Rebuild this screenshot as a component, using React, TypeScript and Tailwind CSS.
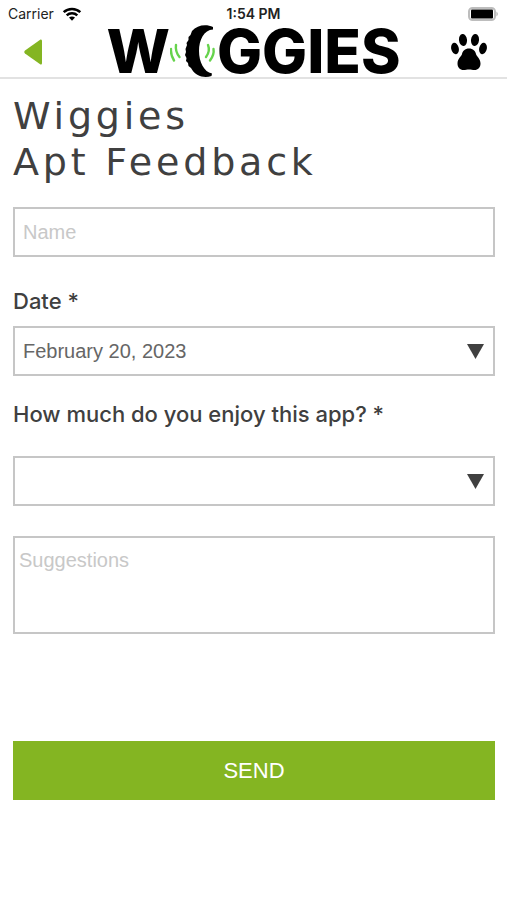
import { useState } from "react";
import type { ReactNode } from "react";

const fieldClass =
  "block w-full rounded-none border-2 border-[#c6c6c6] bg-white font-['Liberation_Sans',Arial,sans-serif] text-xl outline-none";

function StatusBar() {
  return (
    <div className="grid h-7 grid-cols-3 items-center px-2 font-['Inter',sans-serif] text-sm text-[#222]">
      <div className="flex items-center gap-2">
        <span>Carrier</span>
        <svg viewBox="0 0 20 14" className="h-[14px] w-5" aria-hidden="true">
          <g fill="none" stroke="#000" strokeWidth="2.500">
            <path d="M1.700 5.200C6.200 .9 13.800 .9 18.300 5.200" />
            <path d="M4.700 8.400C7.700 5.600 12.300 5.600 15.300 8.400" />
          </g>
          <path d="M7 10.600C8.700 9.100 11.300 9.100 13 10.600L10 13.700Z" />
        </svg>
      </div>
      <span className="text-center font-semibold">1:54 PM</span>
      <svg viewBox="0 0 31 14" className="h-[14px] w-[31px] justify-self-end" aria-hidden="true">
        <rect x="1" y="1" width="26" height="12" rx="3.500" fill="#fff" stroke="#bdbdbd" strokeWidth="2" />
        <rect x="3" y="2.500" width="22" height="9" rx="1" fill="#000" />
        <path d="M28.500 4.500Q31 7 28.500 9.500Z" fill="#aaa" />
      </svg>
    </div>
  );
}

function Logo() {
  return (
    <div className="mb-0.5 flex h-12 items-center font-['Inter',sans-serif] text-[60px] leading-[48px] font-extrabold text-black">
      <span>W</span>
      <svg viewBox="0 0 47 54" className="h-[54px] w-[47px] shrink-0" aria-hidden="true">
        <path
          d="M43 3C36-.5 27 1 22 7L20.500 11 18.500 13 18.500 16 16.500 19 17 21 15.500 25 16 28 15 31 16.500 34 16 37 18 39 18.500 42 21 44C25 52 34 54.500 41.500 52L42 49.500C34 48 29 38 29 27C29 16 34 6 43 5.500Z"
          fill="#000"
        />
        <g fill="none" stroke="#66d34c" strokeWidth="2.400" strokeLinecap="round">
          <path d="M6 21Q5 27.500 9.500 33" />
          <path d="M1 25Q.500 31 4 36.500" />
          <path d="M38 21Q40.500 27 36 33" />
          <path d="M43.500 25Q44.500 30.500 40 36.500" />
        </g>
      </svg>
      <span>GGIES</span>
    </div>
  );
}

function Header() {
  return (
    <header className="border-b-2 border-[#e2e2e2]">
      <StatusBar />
      <div className="flex h-[49px] items-center justify-between pr-5 pb-0.5 pl-6">
        <button type="button" aria-label="Back" className="flex w-8 items-center">
          <svg viewBox="0 0 18 26" className="h-[26px] w-[18px]" aria-hidden="true">
            <path d="M1 11.500 16.500.500Q18 0 18 2V24Q18 26 16.500 25.500L1 14.500Q-.5 13 1 11.500Z" fill="#84b522" />
          </svg>
        </button>
        <Logo />
        <button type="button" aria-label="Pets">
          <svg viewBox="0 0 36 36" className="size-9" aria-hidden="true">
            <ellipse cx="4" cy="14.500" rx="3.800" ry="5.800" transform="rotate(-12 4 14.500)" />
            <ellipse cx="12" cy="6" rx="4" ry="6" transform="rotate(-6 12 6)" />
            <ellipse cx="24" cy="6" rx="4" ry="6" transform="rotate(6 24 6)" />
            <ellipse cx="32" cy="14.500" rx="3.800" ry="5.800" transform="rotate(12 32 14.500)" />
            <path d="M18 14.500C22 14.500 24.500 17 25 20C25.500 22.500 29.500 24.500 29.500 29.500C29.500 33.500 27 36 23.500 36C21.500 36 20 35.500 18 35.500S14.500 36 12.500 36C9 36 6.500 33.500 6.500 29.500C6.500 24.500 10.500 22.500 11 20C11.500 17 14 14.500 18 14.500Z" />
          </svg>
        </button>
      </div>
    </header>
  );
}

function Label({ htmlFor, children }: { htmlFor: string; children: ReactNode }) {
  return (
    <label htmlFor={htmlFor} className="block font-['Inter',sans-serif] text-[22px] leading-6 font-medium text-[#404040]">
      {children}
    </label>
  );
}

function Dropdown({ id, options }: { id: string; options: string[] }) {
  const [value, setValue] = useState(options[0]);
  return (
    <div className="relative">
      <select
        id={id}
        value={value}
        onChange={(e) => setValue(e.target.value)}
        className={`${fieldClass} h-[50px] appearance-none px-2 text-[#666]`}
      >
        {options.map((option) => (
          <option key={option}>{option}</option>
        ))}
      </select>
      <svg
        viewBox="0 0 17 15"
        className="pointer-events-none absolute inset-y-0 right-[11px] my-auto h-[15px] w-[17px]"
        aria-hidden="true"
      >
        <path d="M0 0H17L8.500 15Z" fill="#404040" />
      </svg>
    </div>
  );
}

export default function App() {
  return (
    <div className="min-h-screen bg-white">
      <Header />
      <main className="pt-[14px] pr-3 pl-[13px]">
        <h1 className="font-['DejaVu_Sans',sans-serif] text-[38px] leading-[46px] font-normal tracking-widest text-[#404040]">
          Wiggies
          <br />
          Apt Feedback
        </h1>
        <form className="mt-[22px]" onSubmit={(e) => e.preventDefault()}>
          <input
            type="text"
            aria-label="Name"
            placeholder="Name"
            className={`${fieldClass} h-[50px] px-2 text-[#666] placeholder:text-[#c8c8c8]`}
          />
          <div className="mt-8 flex flex-col gap-[13px]">
            <Label htmlFor="date">Date *</Label>
            <Dropdown id="date" options={["February 20, 2023", "February 21, 2023"]} />
          </div>
          <div className="mt-[26px] flex flex-col gap-[30px]">
            <Label htmlFor="enjoy">How much do you enjoy this app? *</Label>
            <Dropdown id="enjoy" options={["", "A lot", "Somewhat", "Not at all"]} />
          </div>
          <textarea
            aria-label="Suggestions"
            placeholder="Suggestions"
            className={`${fieldClass} mt-[30px] h-[98px] resize-none px-1 py-2 text-[#666] placeholder:text-[#c8c8c8]`}
          />
          <button
            type="submit"
            className="mt-[107px] h-[59px] w-full bg-[#84b522] font-['Liberation_Sans',Arial,sans-serif] text-[22px] text-white"
          >
            SEND
          </button>
        </form>
      </main>
    </div>
  );
}
